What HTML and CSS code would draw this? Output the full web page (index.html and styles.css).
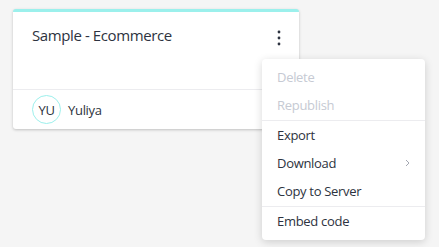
FILE: index.html
```html
<!DOCTYPE html>
<html lang="en">
<head>
  <meta charset="UTF-8">
  <meta name="viewport" content="width=device-width, initial-scale=1.0">
  <title>Projects</title>
  <link rel="stylesheet" href="styles.css">
</head>
<body>
  <div class="board">
    <div class="card">
      <div class="card-head">
        <div class="card-title">Sample - Ecommerce</div>
        <button class="kebab" aria-label="More">
          <svg width="4" height="16" viewBox="0 0 4 16">
            <circle cx="2" cy="2" r="1.4"/>
            <circle cx="2" cy="8" r="1.4"/>
            <circle cx="2" cy="14" r="1.4"/>
          </svg>
        </button>
      </div>
      <div class="card-foot">
        <span class="avatar">YU</span>
        <span class="owner">Yuliya</span>
      </div>
    </div>

    <ul class="menu">
      <li class="item disabled">Delete</li>
      <li class="item disabled">Republish</li>
      <li class="sep"></li>
      <li class="item">Export</li>
      <li class="item has-sub">Download
        <svg class="chev" width="5" height="8" viewBox="0 0 5 8"><path d="M1 1l3 3-3 3" fill="none" stroke="currentColor" stroke-width="1"/></svg>
      </li>
      <li class="item">Copy to Server</li>
      <li class="sep"></li>
      <li class="item">Embed code</li>
    </ul>
  </div>
</body>
</html>
```

FILE: styles.css
```css
html,
body {
  height: 100%;
  overflow: hidden;
}

body {
  margin: 0;
  background: #f5f5f5;
  font: 13px "Open Sans", sans-serif;
  letter-spacing: -0.3px;
  color: #2d3340;
}

.board {
  position: relative;
  padding: 9px 0 0 13px;
}

.card {
  width: 286px;
  height: 120px;
  background: #fff;
  border-top: 3px solid #9cf0ec;
  border-radius: 3px;
  box-shadow: 0 1px 3px rgba(0, 0, 0, .22);
  box-sizing: border-box;
  display: flex;
  flex-direction: column;
}

.card-head {
  flex: 1;
  display: flex;
  justify-content: space-between;
  align-items: flex-start;
  padding: 13px 18px 0 19px;
  border-bottom: 1px solid #ececef;
}

.card-title {
  font-size: 15px;
  line-height: 20px;
  letter-spacing: -0.4px;
}

.kebab {
  border: 0;
  background: none;
  padding: 0;
  margin-top: 5px;
  fill: #2d3340;
  display: flex;
}

.card-foot {
  height: 39px;
  display: flex;
  align-items: center;
  padding-left: 19px;
  gap: 7px;
}

.avatar {
  width: 27px;
  height: 27px;
  border: 1px solid #9cf0ec;
  border-radius: 50%;
  display: flex;
  align-items: center;
  justify-content: center;
  font-size: 13px;
}

.menu {
  position: absolute;
  left: 262px;
  top: 59px;
  width: 163px;
  margin: 0;
  padding: 4px 0 5px;
  list-style: none;
  background: #fff;
  border-radius: 4px;
  box-shadow: 0 2px 8px rgba(0, 0, 0, .16);
}

.item {
  height: 28px;
  display: flex;
  align-items: center;
  justify-content: space-between;
  padding: 0 15px;
}

.item.disabled {
  color: #c6cad3;
}

.item + .item {
  height: 28.5px;
}

.chev {
  color: #a4a8b2;
}

.sep {
  height: 1px;
  background: #ececef;
}
```
